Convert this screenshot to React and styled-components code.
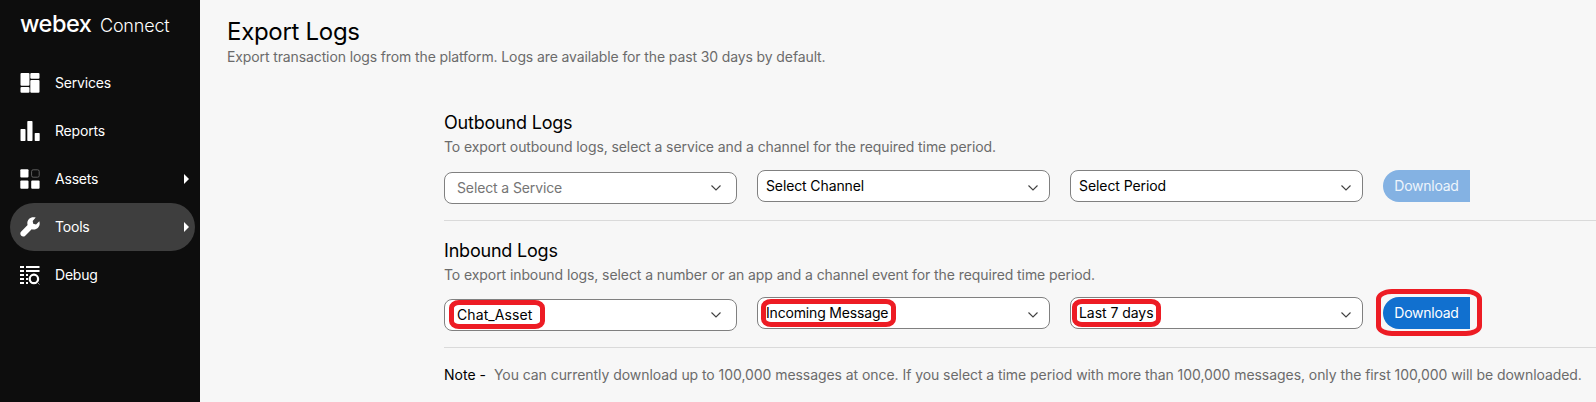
import React from "react";
import styled, { createGlobalStyle } from "styled-components";

const GlobalStyle = createGlobalStyle`
  * { box-sizing: border-box; }
  body { margin: 0; background: #f7f7f7; }
`;

const Shell = styled.div`
  display: flex;
  width: 1596px;
  height: 402px;
  overflow: hidden;
  font-family: Inter, "Liberation Sans", sans-serif;
  font-size: 14px;
  color: #000;
  background: #f7f7f7;
`;

const Sidebar = styled.aside`
  flex: 0 0 200px;
  padding: 0 5px 0 10px;
  background: #0d0d0d;
  color: #fff;
`;

const Brand = styled.div`
  display: flex;
  align-items: baseline;
  height: 59px;
  padding: 10px 0 0 10px;
  line-height: 28px;
`;

const BrandName = styled.span`
  width: 80px;
  font-size: 23.5px;
  font-weight: 500;
  letter-spacing: -0.5px;
`;

const BrandProduct = styled.span`
  font-size: 18px;
  font-weight: 350;
  letter-spacing: -0.2px;
`;

const NavItem = styled.a`
  display: flex;
  align-items: center;
  height: 48px;
  padding: 0 6px 0 10px;
  border-radius: 24px;
  background: ${(p) => (p.$active ? "#3e3e3e" : "transparent")};
`;

const NavLabel = styled.span`
  flex: 1;
  padding-left: 15px;
  letter-spacing: -0.2px;
  line-height: 20px;
`;

const Main = styled.main`
  flex: 1;
  min-width: 0;
  padding: 17px 0 0 27px;
`;

const Title = styled.h1`
  margin: 0;
  font-size: 24px;
  font-weight: 400;
  line-height: 30px;
  letter-spacing: -0.3px;
`;

const Muted = styled.p`
  margin: 0;
  color: #6b6b6b;
  line-height: 20px;
  letter-spacing: ${(p) => p.$spacing || "-0.09px"};
`;

const Panels = styled.div`
  padding: 44px 0 0 217px;
`;

const Panel = styled.section`
  height: ${(p) => p.$height}px;
  padding-top: ${(p) => p.$top || 0}px;
  border-bottom: 1px solid #dadada;
`;

const PanelTitle = styled.h2`
  margin: 0;
  height: 26px;
  font-size: 18px;
  font-weight: 400;
  line-height: 24px;
  letter-spacing: -0.2px;
`;

const Controls = styled.div`
  display: flex;
  align-items: flex-start;
  gap: 20px;
  padding-top: ${(p) => p.$top}px;
`;

const Select = styled.div`
  position: relative;
  display: flex;
  justify-content: space-between;
  align-items: center;
  width: 293px;
  height: 32px;
  margin-top: ${(p) => (p.$combo ? 2 : 0)}px;
  padding: ${(p) => (p.$combo ? "0 15px 0 12px" : "0 11px 0 8px")};
  border: 1px solid #808080;
  border-radius: 8px;
  background: #fff;
  color: ${(p) => (p.$placeholder ? "#757575" : "#000")};
  line-height: 20px;
  letter-spacing: ${(p) => p.$spacing}px;
`;

const Chevron = styled.svg`
  width: 10px;
  height: 6px;
  margin-top: ${(p) => (p.$low ? 4 : 0)}px;
  fill: none;
  stroke: #404040;
  stroke-width: 1.1;
`;

const ButtonWrap = styled.div`
  position: relative;
`;

const Button = styled.button`
  width: 87px;
  height: 32px;
  padding: 0 0 2px;
  border: 0;
  border-radius: 16px 0 0 16px;
  background: ${(p) => (p.$faded ? "#84b2e3" : "#1170cf")};
  color: ${(p) => (p.$faded ? "#eef5fc" : "#fff")};
  font: inherit;
  letter-spacing: -0.25px;
`;

const Marker = styled.span`
  position: absolute;
  left: ${(p) => p.$x}px;
  top: ${(p) => p.$y}px;
  width: ${(p) => p.$w}px;
  height: ${(p) => p.$h}px;
  border: 5px solid #ed1c24;
  border-radius: ${(p) => p.$r || "10px / 8px"};
  pointer-events: none;
`;

const Note = styled.div`
  display: flex;
  gap: 8px;
  padding-top: 17px;
  line-height: 20px;
  white-space: nowrap;
`;

const Icon = styled.svg`
  width: 20px;
  height: 20px;
  fill: #fff;
`;

const Caret = styled.svg`
  width: 5px;
  height: 10px;
  fill: #fff;
`;

const icons = {
  Services: (
    <Icon viewBox="0 0 20 20">
      <rect x="0.5" width="9" height="12.8" rx="1" />
      <rect x="10.3" width="9.2" height="5.8" rx="1" />
      <rect x="0.5" y="14" width="9" height="5.8" rx="1" />
      <rect x="10.3" y="7" width="9.2" height="12.8" rx="1" />
    </Icon>
  ),
  Reports: (
    <Icon viewBox="0 0 20 20">
      <rect x="0.5" y="8" width="5" height="12" rx="0.7" />
      <rect x="7.3" width="5.2" height="20" rx="0.7" />
      <rect x="14.7" y="12" width="5" height="8" rx="0.7" />
    </Icon>
  ),
  Assets: (
    <Icon viewBox="0 0 20 20">
      <rect x="0.3" y="0.2" width="8.2" height="8.4" rx="1" />
      <rect x="11.6" y="0.8" width="7.6" height="7.4" rx="1.6" fill="none" stroke="#666" strokeWidth="0.9" />
      <rect x="0.3" y="11.4" width="8.2" height="8.4" rx="1" />
      <rect x="11.2" y="11.4" width="8.4" height="8.4" rx="1" />
    </Icon>
  ),
  Tools: (
    <Icon viewBox="0 0 20 20">
      <path d="M19.3 4.2 16 7.4 13.2 6.8 12.7 4 15.7.6C13.3-.2 10.7.2 9 2 7.3 3.7 7 6 7.6 8.1L1 14.7C.1 15.6.1 17.5 1 18.6 2.2 19.8 4 19.8 5 18.9L11.7 12.2C13.9 12.9 16.3 12.5 18 10.8 19.7 9 20.1 6.5 19.3 4.2Z" />
    </Icon>
  ),
  Debug: (
    <Icon viewBox="0 0 20 20">
      <path d="M0 1h4v2H0zM6 1h13.5v2H6zM0 5h4v2H0zM6 5h13.5v2H6zM0 9h4v2H0zM6 9h2v2H6zM0 13h4v2H0zM6 13h2v2H6zM0 17h4v2H0zM6 17h2v2H6z" />
      <circle cx="13.9" cy="13.9" r="4.2" fill="none" stroke="#fff" strokeWidth="2.2" />
      <path d="m17 17 2.6 2.6" stroke="#aaa" strokeWidth="0.9" />
    </Icon>
  ),
};

function Item({ label, active, expandable }) {
  return (
    <NavItem $active={active}>
      {icons[label]}
      <NavLabel>{label}</NavLabel>
      {expandable && (
        <Caret viewBox="0 0 5 10"><path d="M0 0 5 5 0 10Z" /></Caret>
      )}
    </NavItem>
  );
}

function Dropdown({ text, combo, placeholder, spacing = -0.12, marker }) {
  return (
    <Select $combo={combo} $placeholder={placeholder} $spacing={spacing}>
      {text}
      <Chevron viewBox="0 0 10 6" $low={!combo}><path d="m.5.5 4.5 4.5 4.5-4.5" /></Chevron>
      {marker && <Marker {...marker} />}
    </Select>
  );
}

export default function App() {
  return (
    <Shell>
      <GlobalStyle />
      <Sidebar>
        <Brand>
          <BrandName>webex</BrandName>
          <BrandProduct>Connect</BrandProduct>
        </Brand>
        <Item label="Services" />
        <Item label="Reports" />
        <Item label="Assets" expandable />
        <Item label="Tools" active expandable />
        <Item label="Debug" />
      </Sidebar>
      <Main>
        <Title>Export Logs</Title>
        <Muted $spacing="-0.115px">Export transaction logs from the platform. Logs are available for the past 30 days by default.</Muted>
        <Panels>
          <Panel $height={110}>
            <PanelTitle>Outbound Logs</PanelTitle>
            <Muted>To export outbound logs, select a service and a channel for the required time period.</Muted>
            <Controls $top={13}>
              <Dropdown text="Select a Service" combo placeholder />
              <Dropdown text="Select Channel" />
              <Dropdown text="Select Period" spacing={-0.08} />
              <Button $faded>Download</Button>
            </Controls>
          </Panel>
          <Panel $height={127} $top={18}>
            <PanelTitle>Inbound Logs</PanelTitle>
            <Muted $spacing="-0.085px">To export inbound logs, select a number or an app and a channel event for the required time period.</Muted>
            <Controls $top={12}>
              <Dropdown text="Chat_Asset" combo spacing={0.1} marker={{ $x: 4, $y: 0, $w: 96, $h: 29 }} />
              <Dropdown text="Incoming Message" spacing={-0.17} marker={{ $x: 3, $y: 1, $w: 135, $h: 28 }} />
              <Dropdown text="Last 7 days" spacing={-0.05} marker={{ $x: 1, $y: 1, $w: 89, $h: 28 }} />
              <ButtonWrap>
                <Button>Download</Button>
                <Marker $x={-7} $y={-8} $w={106} $h={47} $r="16px / 10px" />
              </ButtonWrap>
            </Controls>
          </Panel>
          <Note>
            <span>Note -</span>
            <Muted $spacing="-0.06px">You can currently download up to 100,000 messages at once. If you select a time period with more than 100,000 messages, only the first 100,000 will be downloaded.</Muted>
          </Note>
        </Panels>
      </Main>
    </Shell>
  );
}
